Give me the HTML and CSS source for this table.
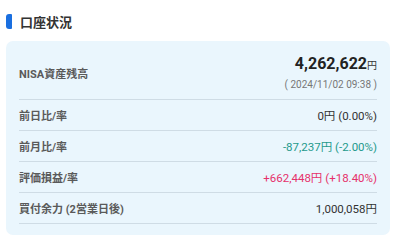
FILE: index.html
```html
<!DOCTYPE html>
<html lang="ja">
<head>
<meta charset="utf-8">
<link rel="stylesheet" href="styles.css">
</head>
<body>
<div class="page">
  <h2 class="heading"><span class="heading-bar"></span>口座状況</h2>
  <div class="card">
    <div class="row row-main">
      <div class="label">NISA資産残高</div>
      <div class="main-value">
        <div class="amount"><span class="amount-num">4,262,622</span><span class="amount-yen">円</span></div>
        <div class="stamp">( 2024/11/02 09:38 )</div>
      </div>
    </div>
    <div class="row">
      <div class="label">前日比/率</div>
      <div class="value">0円 (0.00%)</div>
    </div>
    <div class="row">
      <div class="label">前月比/率</div>
      <div class="value value-down">-87,237円 (-2.00%)</div>
    </div>
    <div class="row">
      <div class="label">評価損益/率</div>
      <div class="value value-up">+662,448円 (+18.40%)</div>
    </div>
    <div class="row">
      <div class="label">買付余力 (2営業日後)</div>
      <div class="value">1,000,058円</div>
    </div>
  </div>
</div>
</body>
</html>
```
FILE: styles.css
```css
* { box-sizing: border-box; }
html, body { margin: 0; padding: 0; background: #ffffff; }
body {
  font-family: "Roboto", "Noto Sans CJK JP", sans-serif;
  color: #333333;
}
.page {
  padding: 13px 10px 0 6px;
}
.heading {
  margin: 0;
  height: 17px;
  display: flex;
  align-items: center;
  gap: 8px;
  font-size: 13px;
  font-weight: 700;
  color: #333333;
  font-family: "Noto Sans CJK JP", sans-serif;
}
.heading-bar {
  width: 6px;
  height: 15px;
  border-radius: 3px 1px 1px 3px;
  background: #1a6fe0;
}
.card {
  margin-top: 11px;
  background: #eaf6fd;
  border-radius: 7px;
  padding: 0 13px 11px 13px;
}
.row {
  display: flex;
  justify-content: space-between;
  align-items: center;
  height: 31px;
  border-bottom: 1px solid #cfdce5;
}
.row-main {
  height: 59px;
  align-items: flex-start;
}
.row-main .label {
  margin-top: 24px;
}
.label {
  font-size: 11px;
  font-weight: 700;
  color: #5a5a5a;
}
.main-value {
  display: flex;
  flex-direction: column;
  align-items: flex-end;
  padding-top: 13px;
}
.amount {
  display: flex;
  align-items: baseline;
  line-height: 20px;
}
.amount-num {
  font-size: 16px;
  font-weight: 700;
  color: #222222;
}
.amount-yen {
  font-size: 10px;
  color: #333333;
}
.stamp {
  margin-top: 3px;
  font-size: 10px;
  line-height: 11px;
  color: #777777;
}
.value {
  font-size: 11.5px;
  color: #333333;
}
.value-down { color: #1f9a8c; }
.value-up { color: #e6316b; }
```
